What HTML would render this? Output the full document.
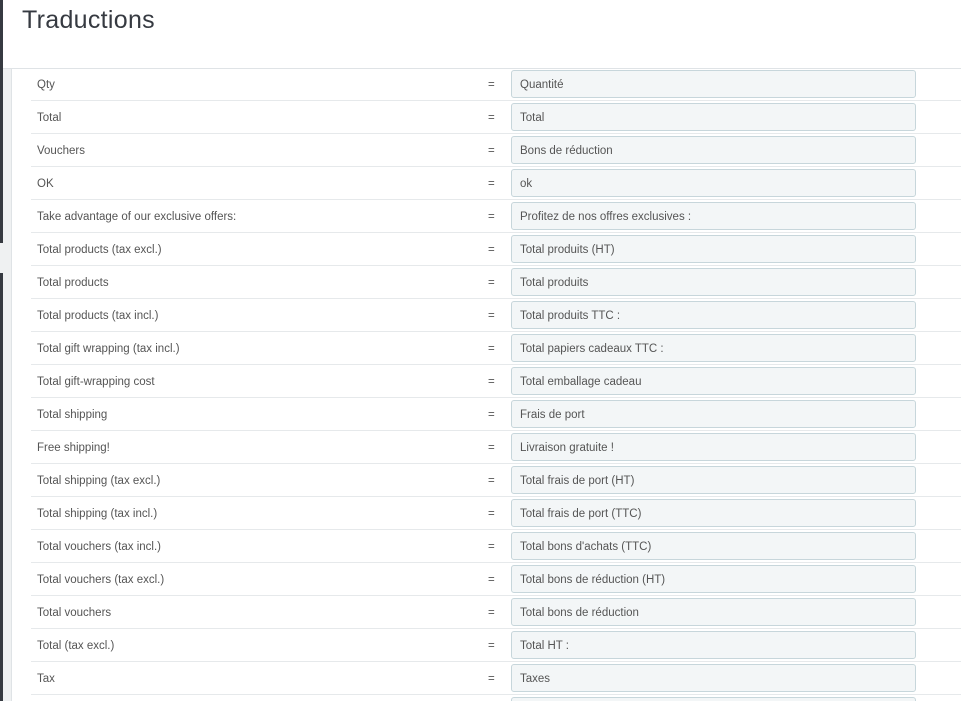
<!DOCTYPE html>
<html style="overflow:hidden;width:962px;height:701px"><head><meta charset="utf-8"><style>
*{margin:0;padding:0;box-sizing:border-box}
body{width:962px;height:701px;overflow:hidden;background:#fff;font-family:"Liberation Sans",sans-serif;position:relative}
.dark{position:absolute;left:0;top:0;width:3px;height:701px;background:#363a41}
.gap{position:absolute;left:0;top:243px;width:3px;height:30px;background:#eff1f2}
.strip{position:absolute;left:3px;top:68px;width:9px;height:633px;background:#eff1f2;border-right:1px solid #dfe3e6}
h1{position:absolute;left:22px;top:6px;font-weight:normal;font-size:25px;color:#363a41;letter-spacing:0.3px}
.hl{position:absolute;left:3px;top:68px;width:958px;height:1px;background:#dfe3e6}
.row{position:absolute;left:31px;width:930px;height:33px;border-bottom:1px solid #e6e9eb}
.lab{position:absolute;left:6px;top:11px;font-size:11.5px;color:#555}
.eq{position:absolute;left:457px;top:11px;font-size:11.5px;color:#555}
.inp{position:absolute;left:480px;top:2px;width:405px;height:28px;background:#f3f6f7;border:1px solid #c7d6db;border-radius:3px;font-size:11.5px;color:#555;padding:8px 0 0 8px}
</style></head><body>
<div class="dark"></div><div class="gap"></div><div class="strip"></div>
<h1>Traductions</h1>
<div class="hl"></div>
<div class="row" style="top:68px"><span class="lab">Qty</span><span class="eq">=</span><div class="inp">Quantité</div></div>
<div class="row" style="top:101px"><span class="lab">Total</span><span class="eq">=</span><div class="inp">Total</div></div>
<div class="row" style="top:134px"><span class="lab">Vouchers</span><span class="eq">=</span><div class="inp">Bons de réduction</div></div>
<div class="row" style="top:167px"><span class="lab">OK</span><span class="eq">=</span><div class="inp">ok</div></div>
<div class="row" style="top:200px"><span class="lab">Take advantage of our exclusive offers:</span><span class="eq">=</span><div class="inp">Profitez de nos offres exclusives :</div></div>
<div class="row" style="top:233px"><span class="lab">Total products (tax excl.)</span><span class="eq">=</span><div class="inp">Total produits (HT)</div></div>
<div class="row" style="top:266px"><span class="lab">Total products</span><span class="eq">=</span><div class="inp">Total produits</div></div>
<div class="row" style="top:299px"><span class="lab">Total products (tax incl.)</span><span class="eq">=</span><div class="inp">Total produits TTC :</div></div>
<div class="row" style="top:332px"><span class="lab">Total gift wrapping (tax incl.)</span><span class="eq">=</span><div class="inp">Total papiers cadeaux TTC :</div></div>
<div class="row" style="top:365px"><span class="lab">Total gift-wrapping cost</span><span class="eq">=</span><div class="inp">Total emballage cadeau</div></div>
<div class="row" style="top:398px"><span class="lab">Total shipping</span><span class="eq">=</span><div class="inp">Frais de port</div></div>
<div class="row" style="top:431px"><span class="lab">Free shipping!</span><span class="eq">=</span><div class="inp">Livraison gratuite !</div></div>
<div class="row" style="top:464px"><span class="lab">Total shipping (tax excl.)</span><span class="eq">=</span><div class="inp">Total frais de port (HT)</div></div>
<div class="row" style="top:497px"><span class="lab">Total shipping (tax incl.)</span><span class="eq">=</span><div class="inp">Total frais de port (TTC)</div></div>
<div class="row" style="top:530px"><span class="lab">Total vouchers (tax incl.)</span><span class="eq">=</span><div class="inp">Total bons d'achats (TTC)</div></div>
<div class="row" style="top:563px"><span class="lab">Total vouchers (tax excl.)</span><span class="eq">=</span><div class="inp">Total bons de réduction (HT)</div></div>
<div class="row" style="top:596px"><span class="lab">Total vouchers</span><span class="eq">=</span><div class="inp">Total bons de réduction</div></div>
<div class="row" style="top:629px"><span class="lab">Total (tax excl.)</span><span class="eq">=</span><div class="inp">Total HT :</div></div>
<div class="row" style="top:662px"><span class="lab">Tax</span><span class="eq">=</span><div class="inp">Taxes</div></div>
<div class="row" style="top:695px;border:none;height:6px;overflow:hidden"><div class="inp"></div></div>
</body></html>
